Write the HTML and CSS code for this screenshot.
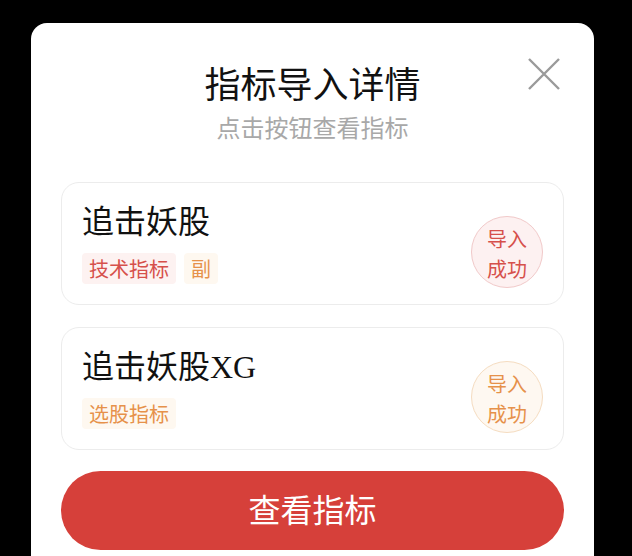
FILE: index.html
```html
<!DOCTYPE html>
<html lang="zh-CN">
<head>
    <meta charset="UTF-8">
    <meta name="viewport" content="width=device-width, initial-scale=1.0">
    <title>指标导入详情</title>
    <link rel="stylesheet" href="styles.css">
</head>
<body>
    <div class="modal">
        <div class="modal_head">
            <h2 class="title">指标导入详情</h2>
            <p class="sub">点击按钮查看指标</p>
            <span class="close">
                <svg width="32" height="32" viewBox="0 0 32 32">
                    <path d="M1 1 L31 31 M31 1 L1 31" stroke="#9a9a9a" stroke-width="2.4" fill="none"/>
                </svg>
            </span>
        </div>

        <ul class="list">
            <li class="item">
                <div class="info">
                    <p class="name">追击妖股</p>
                    <div class="tags">
                        <span class="tag red">技术指标</span>
                        <span class="tag orange">副</span>
                    </div>
                </div>
                <div class="badge red">导入<br>成功</div>
            </li>
            <li class="item">
                <div class="info">
                    <p class="name">追击妖股XG</p>
                    <div class="tags">
                        <span class="tag orange">选股指标</span>
                    </div>
                </div>
                <div class="badge orange">导入<br>成功</div>
            </li>
        </ul>

        <button class="btn">查看指标</button>
    </div>
</body>
</html>
```

FILE: styles.css
```css
* {
    margin: 0;
    padding: 0;
    box-sizing: border-box;
}

body {
    background-color: #000;
    font-family: "Noto Sans CJK SC", "Noto Sans", sans-serif;
    color: #111;
    overflow: hidden;
}

ul {
    list-style: none;
}

.modal {
    width: 563px;
    height: 560px;
    margin: 23px 0 0 31px;
    padding: 0 30px;
    background-color: #fff;
    border-radius: 16px 16px 0 0;
}

.modal_head {
    position: relative;
    padding-top: 37px;
    text-align: center;
}
.title {
    font-size: 36px;
    font-weight: 400;
    line-height: 44px;
    color: #111;
}
.sub {
    margin-top: 8px;
    font-size: 24px;
    line-height: 30px;
    color: #a8a8a8;
}
.close {
    position: absolute;
    top: 35px;
    right: 4px;
    width: 32px;
    height: 32px;
}

.list {
    margin-top: 40px;
}
.item {
    display: flex;
    justify-content: space-between;
    align-items: flex-start;
    height: 123px;
    padding: 19px 20px 0 20px;
    border: 1px solid #ececec;
    border-radius: 18px;
}
.item + .item {
    margin-top: 22px;
}
.name {
    font-family: "Liberation Serif", "Noto Sans CJK SC", serif;
    font-size: 32px;
    line-height: 40px;
    color: #111;
}
.tags {
    display: flex;
    gap: 8px;
    margin-top: 11px;
}
.tag {
    height: 31px;
    padding: 0 7px;
    font-size: 20px;
    line-height: 31px;
    border-radius: 4px;
}
.tag.red {
    color: #d6504b;
    background-color: #fdf2f1;
}
.tag.orange {
    color: #e6914a;
    background-color: #fef8f0;
}

.badge {
    display: flex;
    align-items: center;
    justify-content: center;
    width: 72px;
    height: 72px;
    margin-top: 14px;
    padding-top: 4px;
    border-radius: 50%;
    font-size: 20px;
    line-height: 30px;
    text-align: center;
}
.badge.red {
    color: #d6504b;
    background-color: #fdf1f1;
    border: 1px solid #f1c9c9;
}
.badge.orange {
    color: #e6914a;
    background-color: #fef8f1;
    border: 1px solid #f5dcc0;
}

.btn {
    display: block;
    width: 100%;
    height: 79px;
    margin-top: 21px;
    padding-bottom: 5px;
    border: none;
    border-radius: 40px;
    background-color: #d6403a;
    color: #fff;
    font-family: "Noto Sans CJK SC", sans-serif;
    font-size: 32px;
}
```
